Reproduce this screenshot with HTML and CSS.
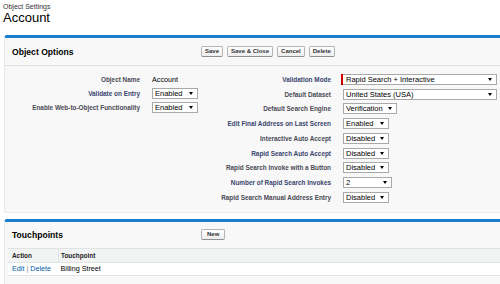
FILE: index.html
```html
<!DOCTYPE html>
<html lang="en">
<head>
    <meta charset="UTF-8" />
    <title>Object Settings: Account</title>
    <link rel="stylesheet" href="styles.css">
</head>
<body>
    <div class="page">
        <div class="page-type">Object Settings</div>
        <h1 class="page-title">Account</h1>

        <div class="panel">
            <div class="panel-head">
                <h2>Object Options</h2>
                <div class="btns">
                    <button class="btn">Save</button>
                    <button class="btn">Save &amp; Close</button>
                    <button class="btn">Cancel</button>
                    <button class="btn">Delete</button>
                </div>
            </div>

            <div class="panel-body">
                <!-- columna izquierda -->
                <div class="col col-left">
                    <label class="lbl">Object Name</label>
                    <span class="val">Account</span>

                    <label class="lbl lbl-help">Validate on Entry</label>
                    <span class="val"><span class="sel"><select class="w46"><option>Enabled</option></select></span></span>

                    <label class="lbl">Enable Web-to-Object Functionality</label>
                    <span class="val"><span class="sel"><select class="w46"><option>Enabled</option></select></span></span>
                </div>

                <!-- columna derecha -->
                <div class="col col-right">
                    <label class="lbl lbl-help">Validation Mode</label>
                    <span class="val required"><span class="sel"><select class="w154"><option>Rapid Search + Interactive</option></select></span></span>

                    <label class="lbl">Default Dataset</label>
                    <span class="val"><span class="sel"><select class="w154"><option>United States (USA)</option></select></span></span>

                    <label class="lbl">Default Search Engine</label>
                    <span class="val"><span class="sel"><select class="w54"><option>Verification</option></select></span></span>

                    <label class="lbl lbl-help">Edit Final Address on Last Screen</label>
                    <span class="val"><span class="sel"><select class="w46"><option>Enabled</option></select></span></span>

                    <label class="lbl">Interactive Auto Accept</label>
                    <span class="val"><span class="sel"><select class="w46"><option>Disabled</option></select></span></span>

                    <label class="lbl lbl-help">Rapid Search Auto Accept</label>
                    <span class="val"><span class="sel"><select class="w46"><option>Disabled</option></select></span></span>

                    <label class="lbl">Rapid Search Invoke with a Button</label>
                    <span class="val"><span class="sel"><select class="w46"><option>Disabled</option></select></span></span>

                    <label class="lbl lbl-help">Number of Rapid Search Invokes</label>
                    <span class="val"><span class="sel"><select class="w49"><option>2</option></select></span></span>

                    <label class="lbl">Rapid Search Manual Address Entry</label>
                    <span class="val"><span class="sel"><select class="w46"><option>Disabled</option></select></span></span>
                </div>
            </div>
        </div>

        <div class="panel panel-tp">
            <div class="panel-head">
                <h2>Touchpoints</h2>
                <div class="btns">
                    <button class="btn">New</button>
                </div>
            </div>
            <table class="list">
                <thead>
                    <tr><th class="c-action">Action</th><th>Touchpoint</th></tr>
                </thead>
                <tbody>
                    <tr>
                        <td class="c-action"><a href="#">Edit</a> <span class="sep">|</span> <a href="#">Delete</a></td>
                        <td>Billing Street</td>
                    </tr>
                </tbody>
            </table>
        </div>
    </div>
</body>
</html>
```

FILE: styles.css
```css
body {
    margin: 0;
    font-family: "Liberation Sans", Arial, sans-serif;
    background: #fff;
    color: #000;
    overflow: hidden;
}

.page {
    padding: 3px 0 0 4px;
}

.page-type {
    font-size: 7px;
    line-height: 8px;
    color: #333;
    margin-left: -1px;
}

.page-title {
    margin: 0 0 10px -1px;
    font-size: 13px;
    line-height: 14px;
    font-weight: normal;
    color: #000;
}

/* Paneles */
.panel {
    margin-right: -20px;
    background: #f8f8f8;
    border: 1px solid #eaeaea;
    border-top: 3px solid #1b7dce;
    border-radius: 3px 0 0 3px;
}

.panel-tp {
    margin-top: 6px;
    height: 70px;
}

.panel-head {
    display: flex;
    align-items: center;
    height: 27px;
    padding-left: 7px;
    border-bottom: 1px solid #dedede;
}

.panel-tp .panel-head {
    height: 26px;
    border-bottom: none;
}

.panel-head h2 {
    width: 189px;
    margin: 0;
    font-size: 8.6px;
    font-weight: bold;
    color: #000;
}

.btns {
    display: flex;
    gap: 4px;
}

.btn {
    height: 11px;
    padding: 0 3px;
    font-family: "Liberation Sans", Arial, sans-serif;
    font-size: 6px;
    font-weight: bold;
    line-height: 9px;
    color: #333;
    background: linear-gradient(#ffffff, #eeeeee);
    border: 1px solid #b5b5b5;
    border-bottom-color: #8f8f8f;
    border-radius: 2px;
}

.panel-tp .btn {
    padding: 0 5px;
}

/* Formulario */
.panel-body {
    display: flex;
    padding: 6px 0 7px;
}

.col {
    display: grid;
    align-items: center;
}

.col-left {
    width: 200px;
    grid-template-columns: 135px auto;
    column-gap: 12px;
    grid-auto-rows: 14px;
    align-content: start;
}

.col-right {
    grid-template-columns: 126px auto;
    column-gap: 10px;
    grid-auto-rows: 14.75px;
}

.lbl {
    text-align: right;
    font-size: 6.4px;
    font-weight: bold;
    color: #4a4a56;
    white-space: nowrap;
}

.lbl-help {
    color: #39456e;
}

.val {
    display: flex;
    align-items: center;
    font-size: 7.2px;
    color: #000;
}

.col-right .val {
    padding-left: 2px;
}

.col-right .val.required {
    padding-left: 0;
}

.required .sel {
    border-left: 2px solid #c00;
}

.sel {
    position: relative;
    display: inline-block;
    height: 11px;
}

.sel select {
    appearance: none;
    -webkit-appearance: none;
    box-sizing: border-box;
    height: 11px;
    margin: 0;
    padding: 0 0 0 2px;
    font-family: "Liberation Sans", Arial, sans-serif;
    font-size: 7.5px;
    line-height: 9px;
    color: #000;
    background: #fff;
    border: 1px solid #a9a9a9;
    border-radius: 0;
}

.required .sel select {
    border-left-width: 0;
    padding-left: 3px;
}

.sel::after {
    content: "";
    position: absolute;
    right: 5px;
    top: 4px;
    border-left: 2px solid transparent;
    border-right: 2px solid transparent;
    border-top: 3px solid #000;
    pointer-events: none;
}

.w46 { width: 46px; }
.w49 { width: 49px; }
.w54 { width: 54px; }
.w154 { width: 154px; }

/* Tabla de touchpoints */
.list {
    margin-left: 3px;
    width: calc(100% - 3px);
    border-collapse: collapse;
}

.list th {
    height: 13px;
    padding: 0 2px;
    text-align: left;
    font-size: 6.4px;
    font-weight: bold;
    color: #222;
    background: #f2f3f3;
    border-top: 1px solid #e0e3e5;
    border-bottom: 1px solid #e0e3e5;
    border-left: 1px solid #e0e3e5;
}

.list td {
    height: 12px;
    padding: 0 2px;
    font-size: 7.2px;
    background: #fff;
    border-bottom: 1px solid #e3e3e3;
}

.list .c-action {
    width: 44px;
    padding-left: 4px;
    border-left: none;
}

.list a {
    color: #015ba7;
    text-decoration: none;
}

.sep {
    color: #888;
}
```
